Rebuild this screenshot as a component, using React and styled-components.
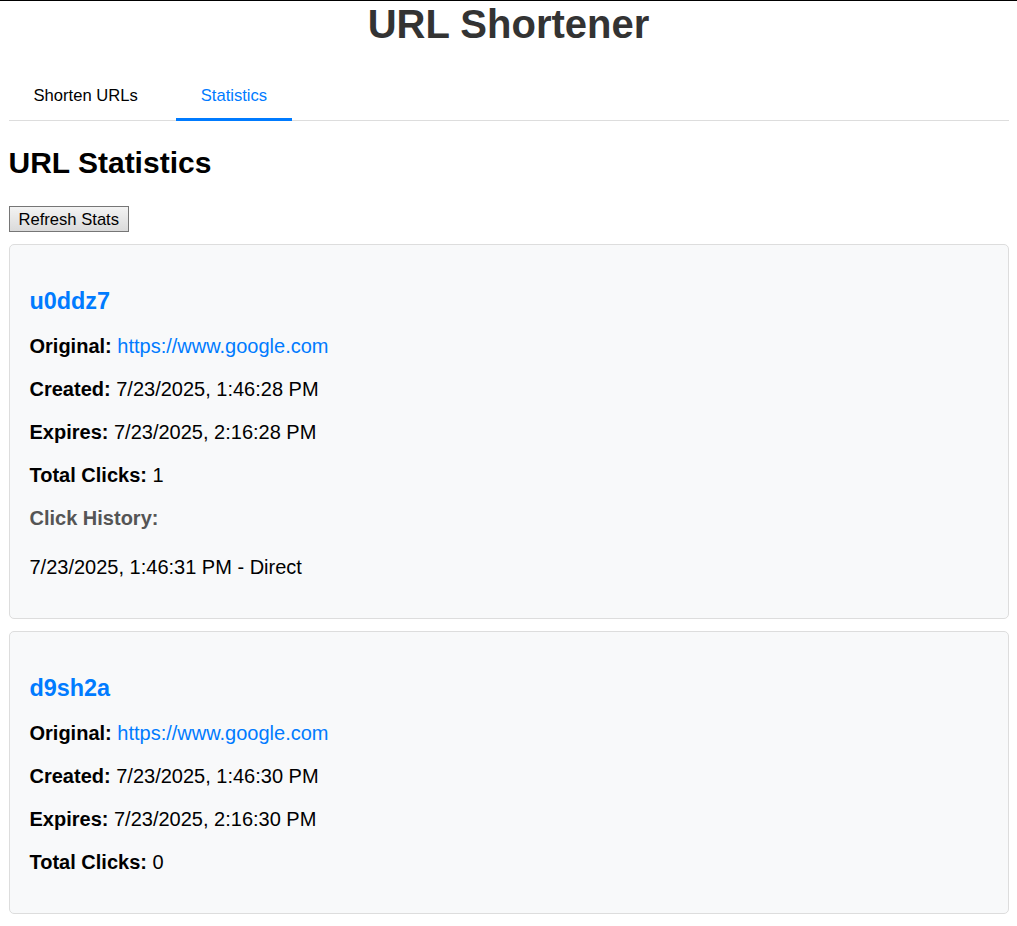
import React from 'react';
import styled, { createGlobalStyle } from 'styled-components';

const GlobalStyle = createGlobalStyle`
  html, body {
    margin: 0;
    padding: 0;
    background: #fff;
  }
  body {
    border-top: 1px solid #000;
    font-family: "Liberation Sans", Arial, sans-serif;
    color: #000;
  }
`;

const Page = styled.div`
  max-width: 1000px;
  margin: 0 auto;
`;

const Title = styled.h1`
  margin: 0 0 28px;
  text-align: center;
  font-size: 40px;
  font-weight: bold;
  color: #333;
  line-height: 46px;
`;

const TabBar = styled.div`
  display: flex;
  gap: 13px;
  border-bottom: 1px solid #ddd;
  margin-bottom: 25px;
`;

const Tab = styled.button`
  background: none;
  border: none;
  border-bottom: 3px solid ${(p) => (p.$active ? '#007bff' : 'transparent')};
  margin-bottom: -1px;
  padding: 11px 25px 13px;
  font-family: inherit;
  font-size: 16.6px;
  line-height: 19px;
  color: ${(p) => (p.$active ? '#007bff' : '#000')};
  cursor: pointer;
`;

const Heading = styled.h2`
  margin: 0 0 26px;
  font-size: 30px;
  line-height: 34px;
  font-weight: bold;
`;

const RefreshButton = styled.button`
  display: block;
  font-family: inherit;
  font-size: 16.6px;
  line-height: 19px;
  padding: 3px 9px 2px;
  border: 1px solid #767676;
  border-radius: 0;
  background: linear-gradient(#f3f3f3, #dadada);
  color: #000;
  margin-bottom: 12px;
`;

const CardList = styled.div`
  display: flex;
  flex-direction: column;
  gap: 12px;
`;

const Card = styled.div`
  background: #f8f9fa;
  border: 1px solid #ddd;
  border-radius: 5px;
  padding: 20px 20px 19px;
  font-size: 20px;
`;

const Code = styled.h3`
  margin: 23px 0 20px;
  font-size: 23.4px;
  line-height: 27px;
  font-weight: bold;
  color: #007bff;
`;

const Row = styled.p`
  margin: 20px 0;
  line-height: 23px;
`;

const Label = styled.strong`
  font-weight: bold;
`;

const Link = styled.a`
  color: #007bff;
  text-decoration: none;
`;

const HistoryTitle = styled.h4`
  margin: 20px 0 26px;
  font-size: 20px;
  line-height: 23px;
  font-weight: bold;
  color: #555;
`;

const HistoryItem = styled.div`
  line-height: 23px;
  margin-bottom: 20px;
`;

const stats = [
  {
    code: 'u0ddz7',
    url: 'https://www.google.com',
    created: '7/23/2025, 1:46:28 PM',
    expires: '7/23/2025, 2:16:28 PM',
    clicks: 1,
    history: ['7/23/2025, 1:46:31 PM - Direct'],
  },
  {
    code: 'd9sh2a',
    url: 'https://www.google.com',
    created: '7/23/2025, 1:46:30 PM',
    expires: '7/23/2025, 2:16:30 PM',
    clicks: 0,
    history: [],
  },
];

function StatCard({ item }) {
  return (
    <Card>
      <Code>{item.code}</Code>
      <Row>
        <Label>Original:</Label> <Link href={item.url}>{item.url}</Link>
      </Row>
      <Row>
        <Label>Created:</Label> {item.created}
      </Row>
      <Row>
        <Label>Expires:</Label> {item.expires}
      </Row>
      <Row>
        <Label>Total Clicks:</Label> {item.clicks}
      </Row>
      {item.history.length > 0 && (
        <>
          <HistoryTitle>Click History:</HistoryTitle>
          {item.history.map((h) => (
            <HistoryItem key={h}>{h}</HistoryItem>
          ))}
        </>
      )}
    </Card>
  );
}

export default function App() {
  return (
    <>
      <GlobalStyle />
      <Page>
        <Title>URL Shortener</Title>
        <TabBar>
          <Tab>Shorten URLs</Tab>
          <Tab $active>Statistics</Tab>
        </TabBar>
        <Heading>URL Statistics</Heading>
        <RefreshButton>Refresh Stats</RefreshButton>
        <CardList>
          {stats.map((item) => (
            <StatCard key={item.code} item={item} />
          ))}
        </CardList>
      </Page>
    </>
  );
}
